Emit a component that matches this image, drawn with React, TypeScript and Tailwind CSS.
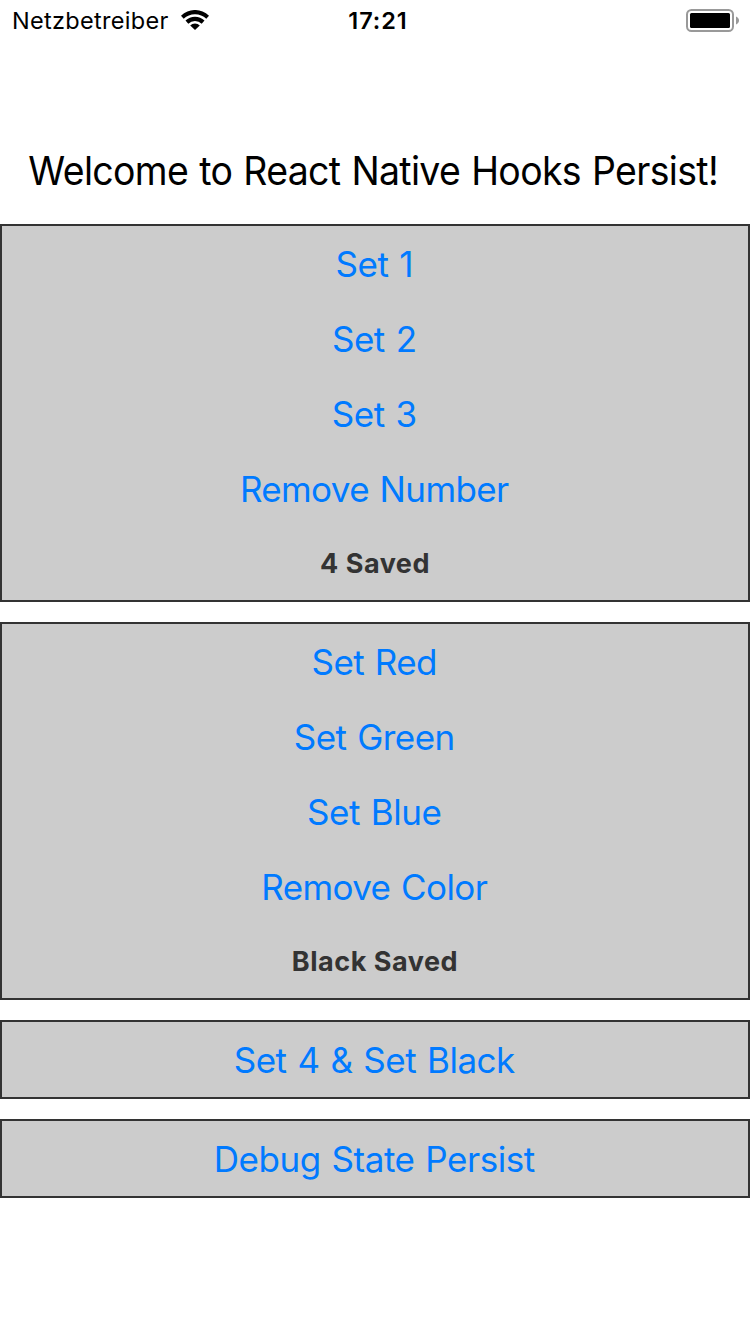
import React from "react";

function Action({ label, tracking }: { label: string; tracking: string }) {
  return (
    <button className="flex h-[75px] w-full items-center justify-center pt-0.5 pr-[1.5px] text-[35px] leading-[43px] text-[#007aff] [word-spacing:1.5px]">
      <span className={tracking}>{label}</span>
    </button>
  );
}

function Saved({ text }: { text: string }) {
  return (
    <p className="mt-[21px] text-center text-[27px] leading-[34px] font-bold tracking-[0.53px] text-[#333]">{text}</p>
  );
}

function StatusBar() {
  return (
    <header className="grid h-10 grid-cols-3 items-center text-[23.5px] leading-[29px]">
      <div className="flex items-center pl-3">
        <span className="w-[169px] tracking-[0.3px]">Netzbetreiber</span>
        <svg width="28" height="20" viewBox="0 0 28 20">
          <path d="M0 5.700a20 20 0 0 1 28 0l-2.700 3.100a16.200 16.200 0 0 0-22.600 0z" />
          <path d="M4.500 10.600a13.500 13.500 0 0 1 19 0l-2.800 3.100a9.600 9.600 0 0 0-13.400 0z" />
          <path d="M9.200 15.400a6.800 6.800 0 0 1 9.600 0l-4.800 4.600z" />
        </svg>
      </div>
      <div className="pl-[6px] text-center font-semibold tracking-[0.9px]">17:21</div>
      <div className="flex justify-end pr-[10px]">
        <svg width="54" height="23" viewBox="0 0 54 23">
          <rect x="1" y="1" width="46" height="21" rx="4.5" fill="none" stroke="#999" strokeWidth="2" />
          <rect x="4" y="4" width="40" height="15" rx="1.5" fill="black" />
          <path d="M50 7.500c4 1.500 4 6.500 0 8z" fill="#999" />
        </svg>
      </div>
    </header>
  );
}

const panel = "border-2 border-[#333] bg-[#ccc]";

export default function App() {
  return (
    <div className="h-[1334px] w-[750px] bg-white font-['Inter',sans-serif] text-black">
      <StatusBar />
      <h1 className="mt-[107px] flex h-[48px] items-center justify-center pr-[3px] text-[39px] whitespace-nowrap">
        <span className="inline-block scale-x-[0.96] tracking-[-0.68px] [word-spacing:1.2px]">
          Welcome to React Native Hooks Persist!
        </span>
      </h1>
      <main className="mt-[29px] flex flex-col gap-5">
        <section className={`${panel} h-[378px]`}>
          <Action label="Set 1" tracking="tracking-[-0.5px]" />
          <Action label="Set 2" tracking="tracking-[-0.5px]" />
          <Action label="Set 3" tracking="tracking-[-0.5px]" />
          <Action label="Remove Number" tracking="tracking-[-0.64px]" />
          <Saved text="4 Saved" />
        </section>
        <section className={`${panel} h-[378px]`}>
          <Action label="Set Red" tracking="tracking-[-0.6px]" />
          <Action label="Set Green" tracking="tracking-[-0.55px]" />
          <Action label="Set Blue" tracking="tracking-[-0.48px]" />
          <Action label="Remove Color" tracking="tracking-[-0.61px]" />
          <Saved text="Black Saved" />
        </section>
        <section className={`${panel} h-[79px]`}>
          <Action label="Set 4 & Set Black" tracking="tracking-[-0.49px]" />
        </section>
        <section className={`${panel} h-[79px]`}>
          <Action label="Debug State Persist" tracking="tracking-[-0.46px]" />
        </section>
      </main>
    </div>
  );
}
